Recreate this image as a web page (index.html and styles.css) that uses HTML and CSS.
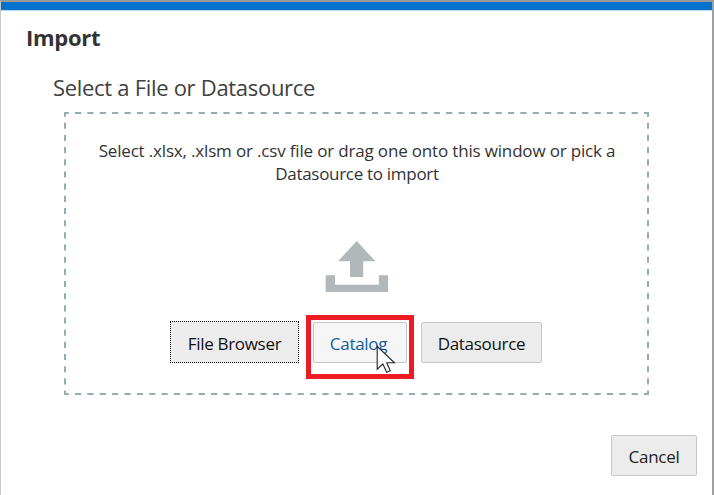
FILE: index.html
```html
<!DOCTYPE html>
<html lang="en">
<head>
<meta charset="utf-8">
<title>Import</title>
<link rel="stylesheet" href="styles.css">
</head>
<body>
<main class="dialog">
  <h1 class="title">Import</h1>
  <h2 class="subtitle">Select a File or Datasource</h2>
  <section class="dropzone">
    <svg class="outline" width="586" height="284" viewBox="0 0 586 284" fill="none" stroke="#92aeb3" stroke-width="2">
      <path stroke-dasharray="6.2 6.17" stroke-dashoffset="1.4" d="M0 1H585M0 282H585"/>
      <path stroke-dasharray="6.1 6.07" stroke-dashoffset="1.4" d="M1 0V283M584 0V283"/>
    </svg>
    <p class="hint"><span class="hint-first">Select .xlsx, .xlsm or .csv file or drag one onto this window or pick a</span><br>Datasource to import</p>
    <svg class="upload" width="64" height="52" viewBox="0 0 64 52" fill="#b2b7ba">
      <path d="M31.7 0 50.5 20.3H38.2V36H25V20.3H13Z"/>
      <path d="M.7 34.3H10V43.7H54V34.3H63V51H.7Z"/>
    </svg>
    <div class="actions">
      <button class="button focused">File Browser</button>
      <div class="highlight"><button class="button hovered">Catalog</button>
        <svg class="cursor" width="21" height="30" viewBox="0 0 21 30">
          <path d="M1.2 1.4V24.2L6.8 19 10.7 27.3 14.3 25.7 10.7 17.8H18.4Z" fill="#fff" stroke="#24242c" stroke-width="1.1"/>
        </svg>
      </div>
      <button class="button datasource">Datasource</button>
    </div>
  </section>
  <footer class="footer"><button class="button cancel">Cancel</button></footer>
</main>
</body>
</html>
```

FILE: styles.css
```css
* { box-sizing: border-box; }
body { margin: 0; background: #fff; font-family: "Open Sans", "Noto Sans", sans-serif; color: #333; }
.dialog { height: 495px; border-left: 1px solid #c8c8c8; border-right: 2px solid #a0a0a0; border-top: 2px solid #999; overflow: hidden; }
.dialog::before { content: ""; display: block; height: 8px; background: #0572ce; border-bottom: 1px solid #b5daf4; }
.title { margin: 11px 0 0 25px; font-size: 22px; line-height: 30px; font-weight: 700; letter-spacing: -.3px; }
.subtitle { margin: 20px 0 0 52px; font-size: 22px; line-height: 30px; font-weight: 400; letter-spacing: -.3px; color: #404040; }
.dropzone { position: relative; width: 586px; height: 284px; margin: 9px 0 0 63px; padding-top: 28px; display: flex; flex-direction: column; align-items: center; }
.outline { position: absolute; left: 0; top: 1px; }
.hint { margin: 0; font-size: 17px; line-height: 23px; letter-spacing: -.3px; text-align: center; white-space: nowrap; }
.hint-first { letter-spacing: -.17px; }
.upload { margin-top: 56px; }
.actions { display: flex; align-items: flex-start; margin-top: 22px; width: 374px; }
.button { flex: none; height: 41px; padding: 2px 0 0; border: 1px solid #c7c7c7; border-radius: 2px; background: #ececec; color: #111; font: 17px/24px "Open Sans", "Noto Sans", sans-serif; letter-spacing: -.3px; white-space: nowrap; }
.focused { width: 129px; height: 42px; margin-top: 6px; padding-top: 3px; border: 1px dotted #000; border-radius: 0; }
.highlight { position: relative; width: 108px; height: 64px; margin-left: 7px; padding: 2px 0 0 2px; border: 5px solid #ed1c24; }
.hovered { width: 94px; padding-right: 3px; background: #f6f6f6; color: #145c9e; }
.cursor { position: absolute; left: 65px; top: 25px; }
.datasource { width: 121px; margin: 7px 0 0 7px; }
.footer { display: flex; justify-content: flex-end; margin: 40px 15px 0 0; }
.cancel { width: 86px; padding-top: 2px; color: #222; }
```
